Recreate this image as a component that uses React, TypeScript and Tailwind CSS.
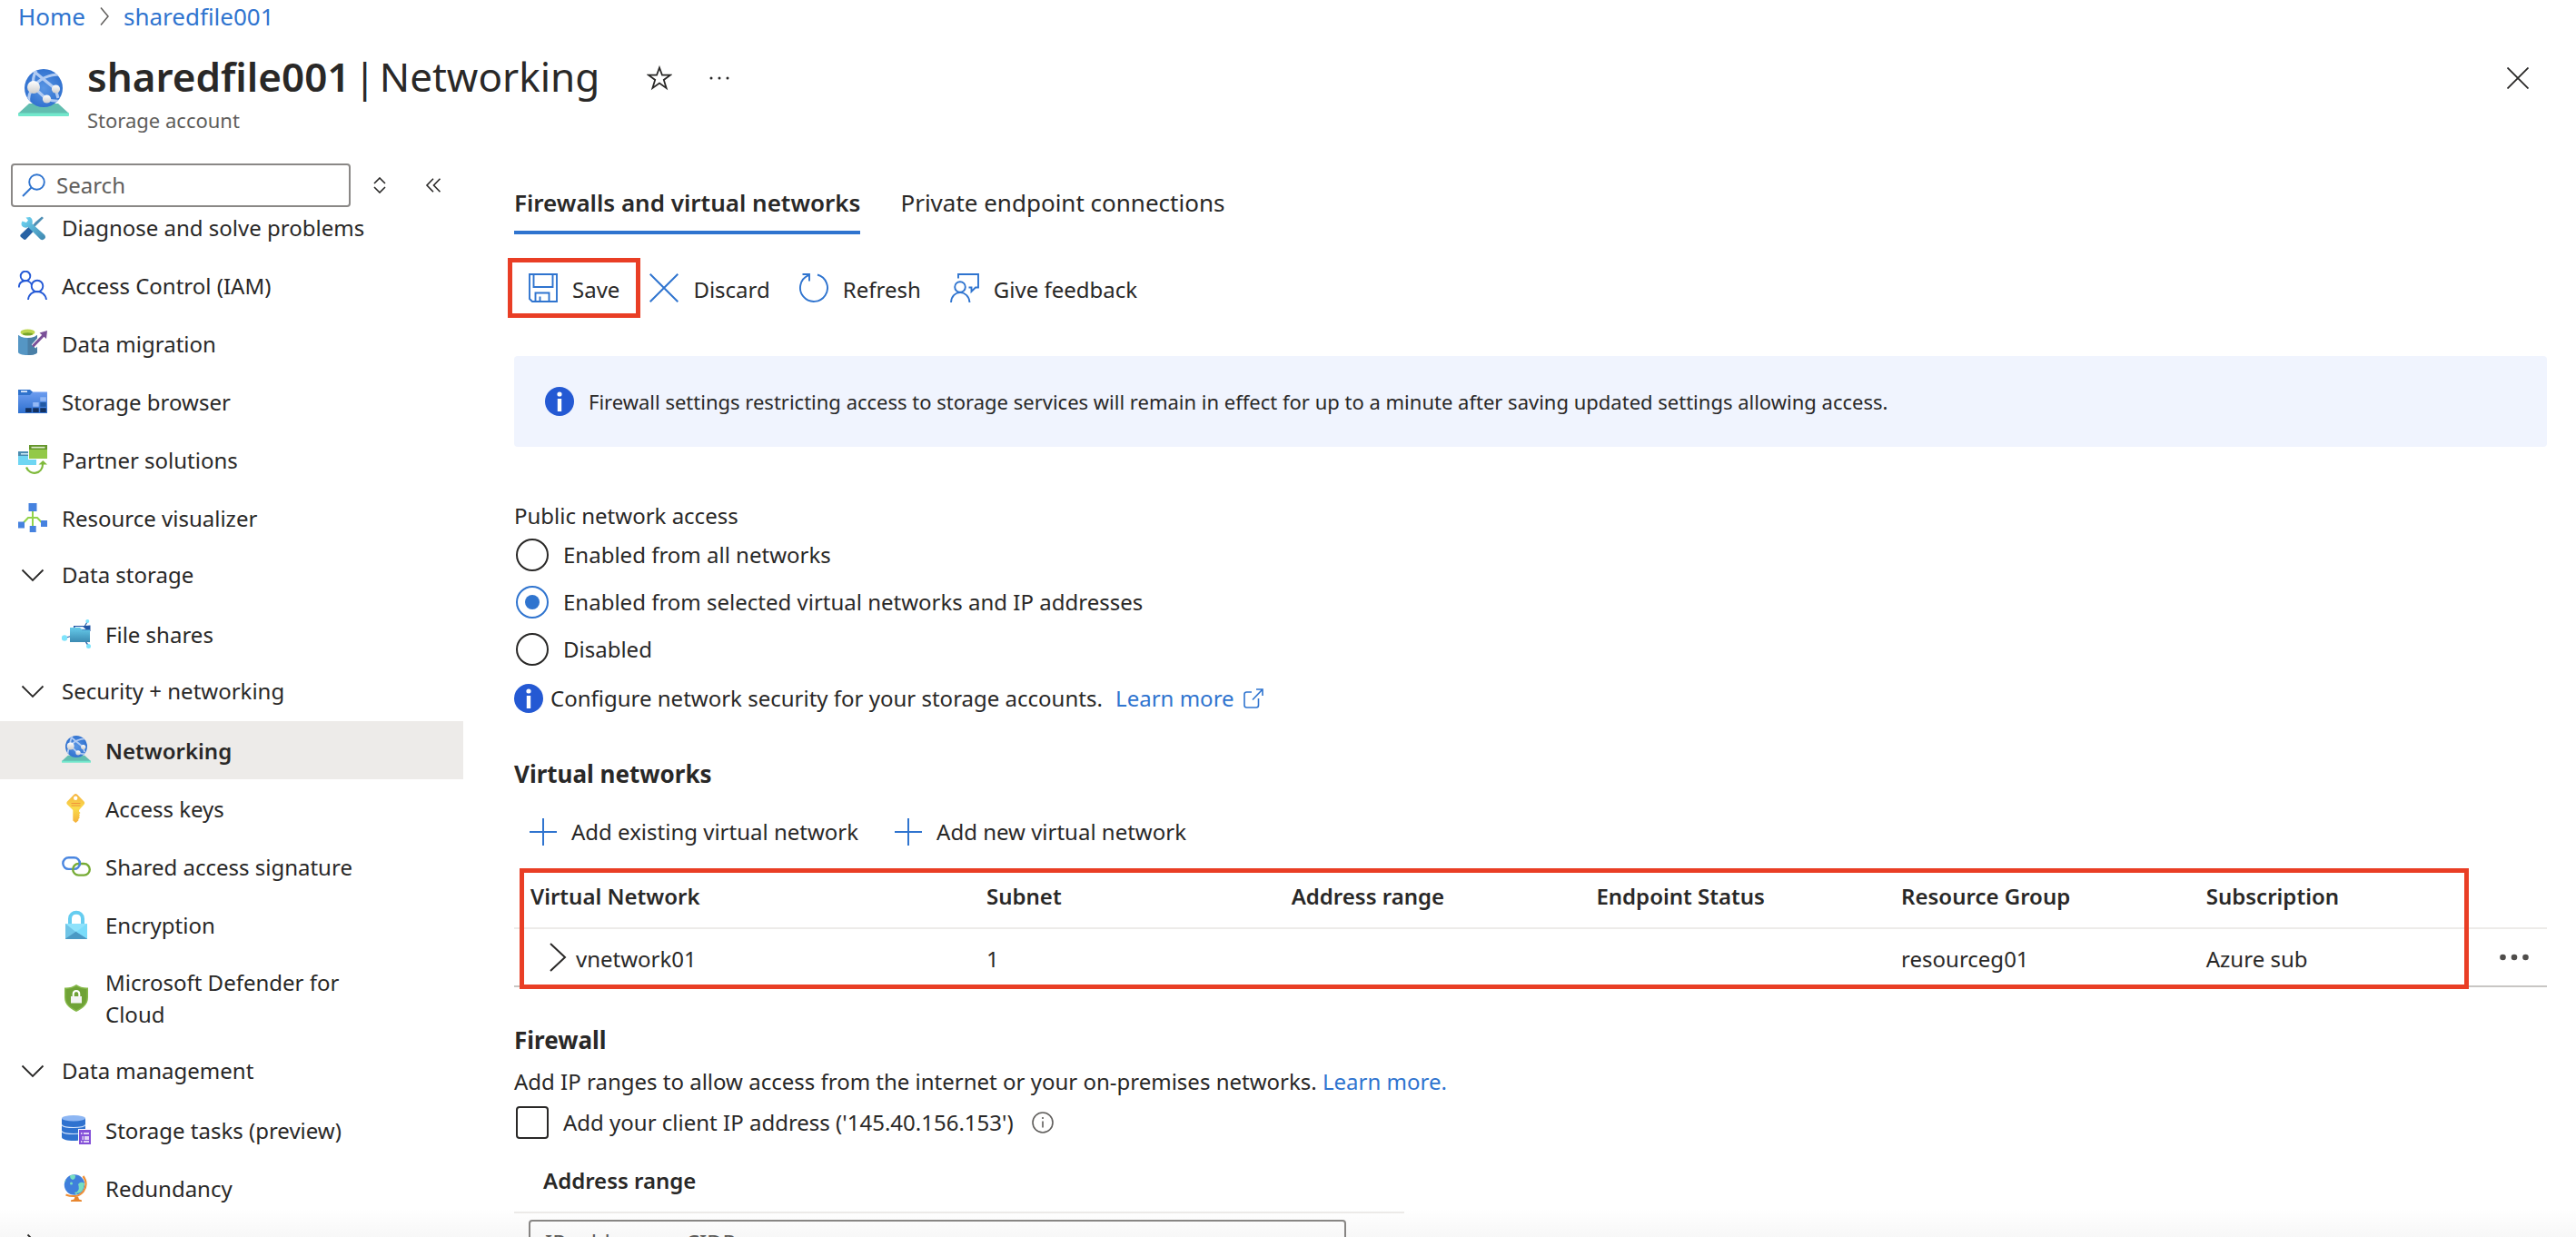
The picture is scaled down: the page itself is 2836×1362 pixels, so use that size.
import React, { useState } from 'react';

interface IconProps {
  className?: string;
}

const NetworkGlobeIcon = ({ className = 'size-8' }: IconProps) => (
  <svg viewBox="0 0 56 56" className={className} aria-hidden="true">
    <defs>
      <radialGradient id="globe" cx="0.5" cy="0.5" r="0.55">
        <stop offset="0" stopColor="#5a96e4" />
        <stop offset="1" stopColor="#2e6fce" />
      </radialGradient>
      <linearGradient id="node" x1="0" y1="0" x2="0" y2="1">
        <stop offset="0" stopColor="#ffffff" />
        <stop offset="1" stopColor="#cdcdcd" />
      </linearGradient>
      <clipPath id="globeClip">
        <circle cx="28" cy="21" r="21" />
      </clipPath>
    </defs>
    <path d="M12 38h32l12 11H0z" fill="#62beb0" />
    <path d="M0 48.500h56V51q0 1-1 1H1q-1 0-1-1z" fill="#72e8cc" />
    <circle cx="28" cy="21" r="21" fill="url(#globe)" />
    <g clipPath="url(#globeClip)" stroke="#b0cbf3" strokeWidth="3.200" fill="none">
      <path d="M17 19Q28 6 46 6" />
      <path d="M17 19Q15 10 20 2" />
      <path d="M13 -1L41 22L44 32" />
      <path d="M17 20L31 33Q40 36 48 35" />
      <path d="M17 20Q10 28 12 38" />
    </g>
    <circle cx="17" cy="20" r="7" fill="url(#node)" />
    <circle cx="41.500" cy="22" r="4.600" fill="url(#node)" />
    <circle cx="31.500" cy="33" r="4.600" fill="url(#node)" />
  </svg>
);

const ToolsIcon = () => (
  <svg viewBox="0 0 32 32" className="size-8" aria-hidden="true">
    <defs>
      <linearGradient id="wrench" x1="0" y1="0" x2="1" y2="1">
        <stop offset="0" stopColor="#6fd8f6" />
        <stop offset="1" stopColor="#3f86ae" />
      </linearGradient>
    </defs>
    <path d="M28 6l-2-1.500-7 6-3.500 4 2 2 4-4z" fill="#4f8fb5" />
    <path d="M13 14.500l5 5-9.500 10q-1.500 1-3-.5L3 27q-1.500-1.500 0-3z" fill="#2862a4" />
    <path d="M8.500 5.500l2.500 3-2 2.500-4.500-1.500Q2 14 5.500 16q3 1.500 5.500 0l13.500 13.500q2.500 1.500 4.500-.5t0-4.500L15.500 12.500Q16.500 7 13 5z" fill="url(#wrench)" />
  </svg>
);

const PeopleIcon = () => (
  <svg viewBox="0 0 32 32" className="size-8" fill="none" stroke="#2459d6" strokeWidth="1.900" aria-hidden="true">
    <circle cx="8" cy="6" r="5.300" />
    <circle cx="21" cy="17" r="6.300" />
    <path d="M.8 18.500C1 9.500 12.500 9 15 16" />
    <path d="M11 32c1-12 18.500-12 20 0" />
  </svg>
);

const DataMigrationIcon = () => (
  <svg viewBox="0 0 32 32" className="size-8" aria-hidden="true">
    <path d="M0 7v18.500C0 27.500 4 29 10.500 29S21 27.500 21 25.500V7z" fill="#5596c4" />
    <path d="M10.500 7v22C17 29 21 27.500 21 25.500V7z" fill="#4a7fa6" />
    <ellipse cx="10.500" cy="5.500" rx="10.500" ry="4.500" fill="#fff" />
    <ellipse cx="10.500" cy="4" rx="8" ry="3.400" fill="#bdd650" />
    <ellipse cx="10.500" cy="5.800" rx="5.500" ry="1.500" fill="#78a42c" />
    <path d="M17 19.500L29 6" stroke="#fff" strokeWidth="6" />
    <path d="M17 18.500L28.500 6.500" stroke="#7a4f98" strokeWidth="3" strokeLinecap="round" />
    <path d="M23.500 4.500l8.500-2.500-1 9z" fill="#7a4f98" />
  </svg>
);

const StorageBrowserIcon = () => (
  <svg viewBox="0 0 32 32" className="size-8" aria-hidden="true">
    <defs>
      <linearGradient id="folder" x1="0" y1="0" x2="0" y2="1">
        <stop offset="0" stopColor="#6d9df0" />
        <stop offset="1" stopColor="#2e70cf" />
      </linearGradient>
    </defs>
    <path d="M0 3h13l3 2.500v6H0z" fill="#2f72cc" />
    <path d="M0 9h13l3-3.500h16V29H0z" fill="url(#folder)" />
    <path d="M3 4.200h7v1.800H3z" fill="#d9e8fc" />
    <path d="M24.300 11.200h6.500v4.600h-6.500zM16.200 17h6.500v4.800h-6.500z" fill="#93b8f5" />
    <path d="M24.300 17h6.500v4.800h-6.500z" fill="#225aa5" />
    <path d="M8.100 23.200h6.500V28H8.100zM16.200 23.200h6.500V28h-6.500zM24.300 23.200h6.500V28h-6.500z" fill="#12305f" />
  </svg>
);

const PartnerIcon = () => (
  <svg viewBox="0 0 32 32" className="size-8" aria-hidden="true">
    <path d="M0 8h12v6h8v8H0z" fill="#6fd6f3" />
    <path d="M0 7h12v5H0z" fill="#4b8cb0" />
    <path d="M3 9h8v1.500H3z" fill="#cfeaf5" />
    <path d="M11 0h21v16H11z" fill="#fff" />
    <path d="M12 0h20v15H12z" fill="#93c948" />
    <path d="M12 0h20v5H12z" fill="#65962b" />
    <path d="M14.500 1.800h15v1.700h-15z" fill="#dcebc8" />
    <path d="M9 24.500C12.500 34 27 33 27.200 20" fill="none" stroke="#7fb93b" strokeWidth="2.200" />
    <path d="M22.500 21.500L27.300 17l4.700 4.500z" fill="#7fb93b" />
  </svg>
);

const VisualizerIcon = () => (
  <svg viewBox="0 0 32 32" className="size-8" aria-hidden="true">
    <path d="M16 8v18M4.500 23l6.500-7h10l6.500 7" fill="none" stroke="#93d34b" strokeWidth="2" />
    <g fill="#4682df">
      <path d="M11.500 0h9v9h-9zM0 20.500h7v7H0zM25 19h7v7h-7zM12.700 25h7v7h-7z" />
    </g>
  </svg>
);

const FileSharesIcon = () => (
  <svg viewBox="0 0 32 32" className="size-8" aria-hidden="true">
    <defs>
      <linearGradient id="share" x1="0" y1="0" x2="0" y2="1">
        <stop offset="0" stopColor="#66cbea" />
        <stop offset="1" stopColor="#3b8ab2" />
      </linearGradient>
    </defs>
    <path d="M3 20.500l7-2M28.500 2L25 8M26.500 25l3 4" stroke="#2b61a8" strokeWidth="1.300" />
    <path d="M13 7h13l5.500-.500V13H13z" fill="#2156a5" />
    <path d="M14.500 8h9l3 3h-12z" fill="#e8f3fb" />
    <path d="M9 9h11l2.500 2.500H31V25H9z" fill="url(#share)" />
    <circle cx="3" cy="20.500" r="3.200" fill="#7fe3fb" />
    <circle cx="28.300" cy="2" r="2" fill="#7fe3fb" />
    <circle cx="29.500" cy="29.500" r="2.500" fill="#7fe3fb" />
  </svg>
);

const KeyIcon = () => (
  <svg viewBox="0 0 32 32" className="size-8" aria-hidden="true">
    <defs>
      <linearGradient id="key" x1="0" y1="0" x2="0" y2="1">
        <stop offset="0" stopColor="#f5b340" />
        <stop offset="0.500" stopColor="#fadb4c" />
        <stop offset="1" stopColor="#f4b03c" />
      </linearGradient>
    </defs>
    <path d="M13.500.8q1.800-1.500 3.500 0l7.500 7.700q1.300 1.700 0 3.300L19 18v1.500l1.500 1.500-1.500 1.500 1 1-1 1.200.8 1.300-1.500 2v1.500l-3 2.500-3-2.500V18L6 11.800q-1.300-1.600 0-3.300z" fill="url(#key)" />
    <circle cx="15.200" cy="4.800" r="2.200" fill="#fff" />
    <path d="M10.500 10.500h10M10.500 13h10" stroke="#f0953a" strokeWidth="1.100" />
  </svg>
);

const LinkIcon = () => (
  <svg viewBox="0 0 32 32" className="size-8" fill="none" strokeWidth="2.400" aria-hidden="true">
    <rect x="1.300" y="6.300" width="18.600" height="12.600" rx="6.300" stroke="#4a86e0" />
    <rect x="12.200" y="13" width="18.600" height="12.600" rx="6.300" stroke="#77ac35" />
    <path d="M19.500 15q1-2.500 0-4.500" stroke="#4a86e0" />
  </svg>
);

const LockIcon = () => (
  <svg viewBox="0 0 32 32" className="size-8" aria-hidden="true">
    <path d="M9 17V9.500C9 .500 23 .500 23 9.500V17" fill="none" stroke="#66cdf0" strokeWidth="4" />
    <path d="M4 15h24v16q0 1-1 1H5q-1 0-1-1z" fill="#8fe2fb" />
    <path d="M4 15l12 9.500L4 31.500z" fill="#6fc4e6" />
    <path d="M4 31.500l12-8 12 8v.5H4z" fill="#4b99c4" />
    <path d="M28 15L16 24l12 7.500z" fill="#7adcfa" />
  </svg>
);

const ShieldIcon = () => (
  <svg viewBox="0 0 32 32" className="size-8" aria-hidden="true">
    <path d="M16 1q6 4 13 3.500V15c0 9-6.500 12.500-13 16C9.500 27.500 3 24 3 15V4.500Q10 5 16 1z" fill="#86b94a" />
    <path d="M16 3q5.500 3.300 11.500 3.300V15c0 8-5.500 11-11.500 14.200C10 26 4.500 23 4.500 15V6.300Q10.500 6.300 16 3z" fill="#6fa236" />
    <path d="M12.700 14v-2.500c0-4.700 6.600-4.700 6.600 0V14" fill="none" stroke="#fff" strokeWidth="2" />
    <path d="M10 14h12v7.500H10z" fill="#f4f4f4" />
  </svg>
);

const StorageTasksIcon = () => (
  <svg viewBox="0 0 32 32" className="size-8" aria-hidden="true">
    <path d="M0 3v21c0 2.500 6 4 13 4s13-1.500 13-4V3z" fill="#2f72cf" />
    <ellipse cx="13" cy="3.200" rx="13" ry="3.200" fill="#8db6f3" />
    <path d="M0 10.500c2 4 24 4 26 0M0 17.500c2 4 24 4 26 0" fill="none" stroke="#d6e5fb" strokeWidth="1.200" />
    <path d="M18 15h14v17H18z" fill="#fff" />
    <path d="M19 16h13v16H19z" fill="#8450d8" />
    <path d="M21 20h1.500M24 20h6M22.500 24h1.500M25 24h5M22.500 26h1.500M25 26h5M21 29h1.500M24 29h6" stroke="#fff" strokeWidth="1.400" />
  </svg>
);

const RedundancyIcon = () => (
  <svg viewBox="0 0 32 32" className="size-8" aria-hidden="true">
    <circle cx="14" cy="12.500" r="11.200" fill="#3f7fdc" />
    <path d="M18 12q3-4 7-1-1 8-5 10-4 2-3-1 3-3 1-8zM9 2.500q4-2 6 0 0 4-3 4.500-3-1-3-4.500zM3 10q2-1 1.500-3Q2.500 9 3 10zM14 21l4-1-2 3.500z" fill="#78dfc0" />
    <circle cx="10.500" cy="11" r="1.500" fill="#78dfc0" />
    <path d="M23.500 3C32 14 22 30 4.500 23.500" fill="none" stroke="#ef9036" strokeWidth="2.200" />
    <path d="M14.500 25.500h3.500l1 3 3 1V31H10v-1.500l3.500-1z" fill="#e8862e" />
  </svg>
);

const ChevronIcon = ({ className = '' }: IconProps) => (
  <svg viewBox="0 0 32 32" className={`size-8 ${className}`} fill="none" stroke="#292827" strokeWidth="1.800" aria-hidden="true">
    <path d="M4.500 10.500L16 22l11.500-11.500" />
  </svg>
);

const InfoIcon = () => (
  <svg viewBox="0 0 32 32" className="size-8 shrink-0" aria-hidden="true">
    <circle cx="16" cy="16" r="16" fill="#2459d3" />
    <circle cx="16" cy="8" r="2.600" fill="#fff" />
    <path d="M13.800 13h4.400v14h-4.400z" fill="#fff" />
  </svg>
);

const SaveIcon = () => (
  <svg viewBox="0 0 32 32" className="size-8" fill="none" stroke="#2f74cf" strokeWidth="1.900" aria-hidden="true">
    <path d="M1 1h30v30H4l-3-3zM5.500 1v14h21V1M7.500 31V21.500h15V31M12.500 31v-5.500" />
  </svg>
);

const DiscardIcon = () => (
  <svg viewBox="0 0 32 32" className="size-8" stroke="#2f74cf" strokeWidth="2" aria-hidden="true">
    <path d="M.7.700l30.600 30.600M31.300.700L.7 31.300" />
  </svg>
);

const RefreshIcon = () => (
  <svg viewBox="0 0 32 32" className="size-8" fill="none" stroke="#2f74cf" strokeWidth="1.900" aria-hidden="true">
    <path d="M20 1.500A15 15 0 1 1 10 2.200M3.500 1h7.500v7.500" />
  </svg>
);

const FeedbackIcon = () => (
  <svg viewBox="0 0 32 32" className="size-8" fill="none" stroke="#2f74cf" strokeWidth="1.900" aria-hidden="true">
    <path d="M9 5.500V1h22v14.500h-3l-4.500 4.500v-4.500h-3" />
    <circle cx="11" cy="15" r="5.800" />
    <path d="M1 32C1.500 17.500 20.500 17.500 21.500 32" />
  </svg>
);

const PlusIcon = () => (
  <svg viewBox="0 0 30 30" className="size-[30px]" stroke="#2f74cf" strokeWidth="2" aria-hidden="true">
    <path d="M15 0v30M0 15h30" />
  </svg>
);

interface MenuEntry {
  label: string;
  icon?: React.ReactNode;
  kind: 'item' | 'group' | 'child';
  active?: boolean;
  collapsed?: boolean;
}

const menu: MenuEntry[] = [
  { label: 'Diagnose and solve problems', icon: <ToolsIcon />, kind: 'item' },
  { label: 'Access Control (IAM)', icon: <PeopleIcon />, kind: 'item' },
  { label: 'Data migration', icon: <DataMigrationIcon />, kind: 'item' },
  { label: 'Storage browser', icon: <StorageBrowserIcon />, kind: 'item' },
  { label: 'Partner solutions', icon: <PartnerIcon />, kind: 'item' },
  { label: 'Resource visualizer', icon: <VisualizerIcon />, kind: 'item' },
  { label: 'Data storage', kind: 'group' },
  { label: 'File shares', icon: <FileSharesIcon />, kind: 'child' },
  { label: 'Security + networking', kind: 'group' },
  { label: 'Networking', icon: <NetworkGlobeIcon />, kind: 'child', active: true },
  { label: 'Access keys', icon: <KeyIcon />, kind: 'child' },
  { label: 'Shared access signature', icon: <LinkIcon />, kind: 'child' },
  { label: 'Encryption', icon: <LockIcon />, kind: 'child' },
  { label: 'Microsoft Defender for Cloud', icon: <ShieldIcon />, kind: 'child' },
  { label: 'Data management', kind: 'group' },
  { label: 'Storage tasks (preview)', icon: <StorageTasksIcon />, kind: 'child' },
  { label: 'Redundancy', icon: <RedundancyIcon />, kind: 'child' },
  { label: 'Settings', kind: 'group', collapsed: true },
];

const accessOptions = [
  'Enabled from all networks',
  'Enabled from selected virtual networks and IP addresses',
  'Disabled',
];

const columns = ['Virtual Network', 'Subnet', 'Address range', 'Endpoint Status', 'Resource Group', 'Subscription'];

const Header = () => (
  <header>
    <nav aria-label="Breadcrumb" className="flex h-9 items-center gap-4 px-5 text-[26px] text-[#2f74cf]">
      <a href="#home">Home</a>
      <svg viewBox="0 0 10 20" className="h-5 w-[10px]" fill="none" stroke="#605e5c" strokeWidth="1.500" aria-hidden="true">
        <path d="M1 .500L9 10l-8 9.500" />
      </svg>
      <a href="#sharedfile001">sharedfile001</a>
    </nav>
    <div className="flex items-start px-5 pt-4 pb-8">
      <NetworkGlobeIcon className="mt-6 mr-5 size-14 shrink-0" />
      <div>
        <h1 className="flex gap-1 text-[44px] leading-16 whitespace-nowrap">
          <span className="font-semibold">sharedfile001</span>
          <span>|</span>
          <span>Networking</span>
        </h1>
        <p className="text-[22px] leading-8 text-[#605e5c]">Storage account</p>
      </div>
      <button aria-label="Add to favorites" className="mt-5 ml-[52px]">
        <svg viewBox="0 0 28 28" className="size-7" fill="none" stroke="#292827" strokeWidth="1.800" aria-hidden="true">
          <path d="M14 2.500l3 8.200h9l-7.200 5.200 2.800 9L14 19.500l-7.600 5.400 2.800-9L2 10.700h9z" />
        </svg>
      </button>
      <button aria-label="More actions" className="mt-5 ml-10">
        <svg viewBox="0 0 24 28" className="h-7 w-6" fill="#292827" aria-hidden="true">
          <circle cx="3" cy="14" r="1.500" />
          <circle cx="12" cy="14" r="1.500" />
          <circle cx="21" cy="14" r="1.500" />
        </svg>
      </button>
      <button aria-label="Close" className="mt-[22px] mr-8 ml-auto">
        <svg viewBox="0 0 24 24" className="size-6" stroke="#292827" strokeWidth="1.800" aria-hidden="true">
          <path d="M.5.500l23 23M23.500.500l-23 23" />
        </svg>
      </button>
    </div>
  </header>
);

const MenuRow = ({ entry }: { entry: MenuEntry }) => {
  if (entry.kind === 'group') {
    return (
      <button
        aria-expanded={!entry.collapsed}
        className="flex h-16 w-full shrink-0 items-center gap-4 pb-[2px] pl-5 text-left"
      >
        <ChevronIcon className={entry.collapsed ? '-rotate-90' : ''} />
        {entry.label}
      </button>
    );
  }
  return (
    <a
      href="#"
      aria-current={entry.active ? 'page' : undefined}
      className={`flex min-h-16 items-center gap-4 py-[14px] pr-24 leading-[35px] ${
        entry.kind === 'child' ? 'pl-[68px]' : 'pl-5'
      } ${entry.active ? 'bg-[#edebe9] font-semibold' : ''}`}
    >
      <span className="shrink-0">{entry.icon}</span>
      {entry.label}
    </a>
  );
};

const Sidebar = () => (
  <aside className="flex w-[510px] shrink-0 flex-col">
    <div className="flex items-center pl-3">
      <label className="flex h-12 w-[374px] items-center gap-3 rounded-sm border-2 border-[#8a8886] px-[10px]">
        <svg viewBox="0 0 26 26" className="size-[26px] shrink-0" fill="none" stroke="#2f74cf" strokeWidth="1.900" aria-hidden="true">
          <circle cx="16.500" cy="9.500" r="8.300" />
          <path d="M10.500 15.500L1 25" />
        </svg>
        <input
          type="search"
          aria-label="Search"
          placeholder="Search"
          className="w-full bg-transparent outline-none placeholder:text-[#605e5c]"
        />
      </label>
      <button aria-label="Expand or collapse all" className="ml-6">
        <svg viewBox="0 0 16 18" className="h-[18px] w-4" fill="none" stroke="#292827" strokeWidth="1.600" aria-hidden="true">
          <path d="M2 7l6-6 6 6M2 11l6 6 6-6" />
        </svg>
      </button>
      <button aria-label="Hide menu" className="ml-[42px]">
        <svg viewBox="0 0 18 16" className="h-4 w-[18px]" fill="none" stroke="#292827" strokeWidth="1.600" aria-hidden="true">
          <path d="M9 .800L2 8l7 7.200M16.500.800L9.500 8l7 7.200" />
        </svg>
      </button>
    </div>
    {/* menu is scrolled slightly, so its first row tucks under the search box */}
    <nav aria-label="Resource menu" className="min-h-0 flex-1 overflow-hidden">
      <div className="-mt-[10px]">
        {menu.map((entry) => (
          <MenuRow key={entry.label} entry={entry} />
        ))}
      </div>
    </nav>
  </aside>
);

const Toolbar = () => (
  <div className="mt-[26px] -ml-[7px] flex h-[66px] items-stretch">
    <button className="flex items-center gap-4 border-[5px] border-[#e93e25] px-[18px]">
      <SaveIcon />
      <span className="pt-1">Save</span>
    </button>
    <div className="ml-[10px] flex gap-8">
      <button className="flex items-center gap-4">
        <DiscardIcon />
        <span className="pt-1">Discard</span>
      </button>
      <button className="flex items-center gap-4">
        <RefreshIcon />
        <span className="pt-1">Refresh</span>
      </button>
      <button className="flex items-center gap-4">
        <FeedbackIcon />
        <span className="pt-1">Give feedback</span>
      </button>
    </div>
  </div>
);

const NetworkTable = () => (
  <div className="relative mt-[19px]">
    <table className="w-full table-fixed border-separate border-spacing-0 text-left">
      <colgroup>
        <col className="w-[502px]" />
        <col className="w-[15%]" />
        <col className="w-[15%]" />
        <col className="w-[15%]" />
        <col className="w-[15%]" />
        <col />
        <col className="w-[72px]" />
      </colgroup>
      <thead>
        <tr className="h-[70px]">
          {columns.map((column) => (
            <th key={column} className="border-b-2 border-[#edebe9] pl-[18px] font-semibold">
              {column}
            </th>
          ))}
          <th aria-label="Actions" className="border-b-2 border-[#edebe9]" />
        </tr>
      </thead>
      <tbody>
        <tr className="h-16">
          <td className="border-b-2 border-[#c8c6c4] pl-[38px]">
            <button className="flex items-center gap-[10px]">
              <svg viewBox="0 0 20 32" className="h-8 w-5" fill="none" stroke="#292827" strokeWidth="2" aria-hidden="true">
                <path d="M2 1l16 15L2 31" />
              </svg>
              <span className="pt-1">vnetwork01</span>
            </button>
          </td>
          <td className="border-b-2 border-[#c8c6c4] pt-1 pl-[18px]">1</td>
          <td className="border-b-2 border-[#c8c6c4]" />
          <td className="border-b-2 border-[#c8c6c4]" />
          <td className="border-b-2 border-[#c8c6c4] pt-1 pl-[18px]">resourceg01</td>
          <td className="border-b-2 border-[#c8c6c4] pt-1 pl-[18px]">Azure sub</td>
          <td className="border-b-2 border-[#c8c6c4] pl-5">
            <button aria-label="Row actions" className="block">
              <svg viewBox="0 0 32 8" className="h-2 w-8" fill="#4f4d4b" aria-hidden="true">
                <circle cx="3.500" cy="4" r="3.300" />
                <circle cx="16" cy="4" r="3.300" />
                <circle cx="28.500" cy="4" r="3.300" />
              </svg>
            </button>
          </td>
        </tr>
      </tbody>
    </table>
    {/* highlight frame over the table */}
    <div className="pointer-events-none absolute top-[3px] right-[86px] -bottom-[2px] left-[6px] border-[5px] border-[#e93e25]" />
  </div>
);

const FirewallPanel = () => {
  const [addClientIp, setAddClientIp] = useState(false);

  return (
    <section>
      <h2 className="mt-10 text-[26px] leading-9 font-bold">Firewall</h2>
      <p className="mt-[10px] leading-9">
        Add IP ranges to allow access from the internet or your on-premises networks.{' '}
        <a href="#learn" className="text-[#2f74cf]">Learn more.</a>
      </p>
      <div className="mt-[9px] flex items-center">
        <label className="flex items-center gap-4">
          <input
            type="checkbox"
            checked={addClientIp}
            onChange={(e) => setAddClientIp(e.target.checked)}
            className="ml-[2px] size-9 appearance-none rounded-sm border-2 border-[#292827] checked:bg-[#2f74cf]"
          />
          Add your client IP address (&apos;145.40.156.153&apos;)
        </label>
        <button aria-label="Client IP information" className="ml-5">
          <svg viewBox="0 0 24 24" className="size-6" fill="none" stroke="#605e5c" strokeWidth="1.600" aria-hidden="true">
            <circle cx="12" cy="12" r="11" />
            <path d="M12 10.500v7M12 6v2" />
          </svg>
        </button>
      </div>
      <table className="mt-3 w-[980px] max-w-full border-separate border-spacing-0 text-left">
        <thead>
          <tr className="h-[70px]">
            <th className="border-b-2 border-[#edebe9] pl-8 font-semibold">Address range</th>
          </tr>
        </thead>
        <tbody>
          <tr>
            <td className="pt-[7px] pr-16 pl-4">
              <input
                type="text"
                aria-label="Address range"
                placeholder="IP address or CIDR"
                className="h-12 w-full rounded-sm border-2 border-[#8a8886] bg-transparent px-4 outline-none placeholder:text-[#605e5c]"
              />
            </td>
          </tr>
        </tbody>
      </table>
    </section>
  );
};

export default function App() {
  const [access, setAccess] = useState(accessOptions[1]);

  return (
    <div className="relative flex h-screen flex-col overflow-hidden bg-white font-['Noto_Sans',sans-serif] text-2xl text-[#292827]">
      <Header />
      <div className="flex min-h-0 flex-1">
        <Sidebar />
        <main className="min-w-0 flex-1 overflow-hidden pr-8 pl-14">
          <div role="tablist" className="flex gap-11 pt-[25px] text-[26px] leading-9">
            <button role="tab" aria-selected="true" className="border-b-4 border-[#2f74cf] pb-[13px] font-semibold">
              Firewalls and virtual networks
            </button>
            <button role="tab" aria-selected="false" className="border-b-4 border-transparent pb-[13px]">
              Private endpoint connections
            </button>
          </div>
          <Toolbar />
          <div className="mt-[42px] flex h-[100px] items-center gap-4 rounded bg-[#f0f4fe] px-[34px] text-[22px]">
            <InfoIcon />
            <p className="pt-[2px]">
              Firewall settings restricting access to storage services will remain in effect for up to a minute after
              saving updated settings allowing access.
            </p>
          </div>

          <fieldset className="mt-[58px]">
            <legend className="leading-9">Public network access</legend>
            <div className="mt-[7px] flex flex-col gap-4">
              {accessOptions.map((option) => (
                <label key={option} className="flex h-9 items-center gap-4">
                  <input
                    type="radio"
                    name="access"
                    checked={access === option}
                    onChange={() => setAccess(option)}
                    className="ml-[2px] grid size-9 appearance-none place-items-center rounded-full border-2 border-[#292827] checked:border-[#2f74cf] checked:before:size-4 checked:before:rounded-full checked:before:bg-[#2f74cf]"
                  />
                  {option}
                </label>
              ))}
            </div>
          </fieldset>
          <div className="mt-5 flex h-8 items-center gap-2">
            <InfoIcon />
            <p>
              Configure network security for your storage accounts.{' '}
              <a href="#learn" className="ml-2 inline-flex items-center gap-[10px] text-[#2f74cf]">
                Learn more
                <svg viewBox="0 0 22 22" className="size-[22px]" fill="none" stroke="#2f74cf" strokeWidth="1.600" aria-hidden="true">
                  <path d="M9 4H3.500Q1 4 1 6.500v12Q1 21 3.500 21H14q2.500 0 2.500-2.500V11M14 1h7v7M21 1L10 12.500" />
                </svg>
              </a>
            </p>
          </div>

          <h2 className="mt-[49px] text-[26px] leading-9 font-bold">Virtual networks</h2>
          <div className="mt-7 flex h-9 gap-10 pl-[17px]">
            <button className="flex items-center gap-4">
              <PlusIcon />
              Add existing virtual network
            </button>
            <button className="flex items-center gap-4">
              <PlusIcon />
              Add new virtual network
            </button>
          </div>
          <NetworkTable />
          <FirewallPanel />
        </main>
      </div>
      <div className="pointer-events-none absolute inset-x-0 bottom-0 h-8 bg-linear-to-t from-black/3 to-transparent" />
    </div>
  );
}
